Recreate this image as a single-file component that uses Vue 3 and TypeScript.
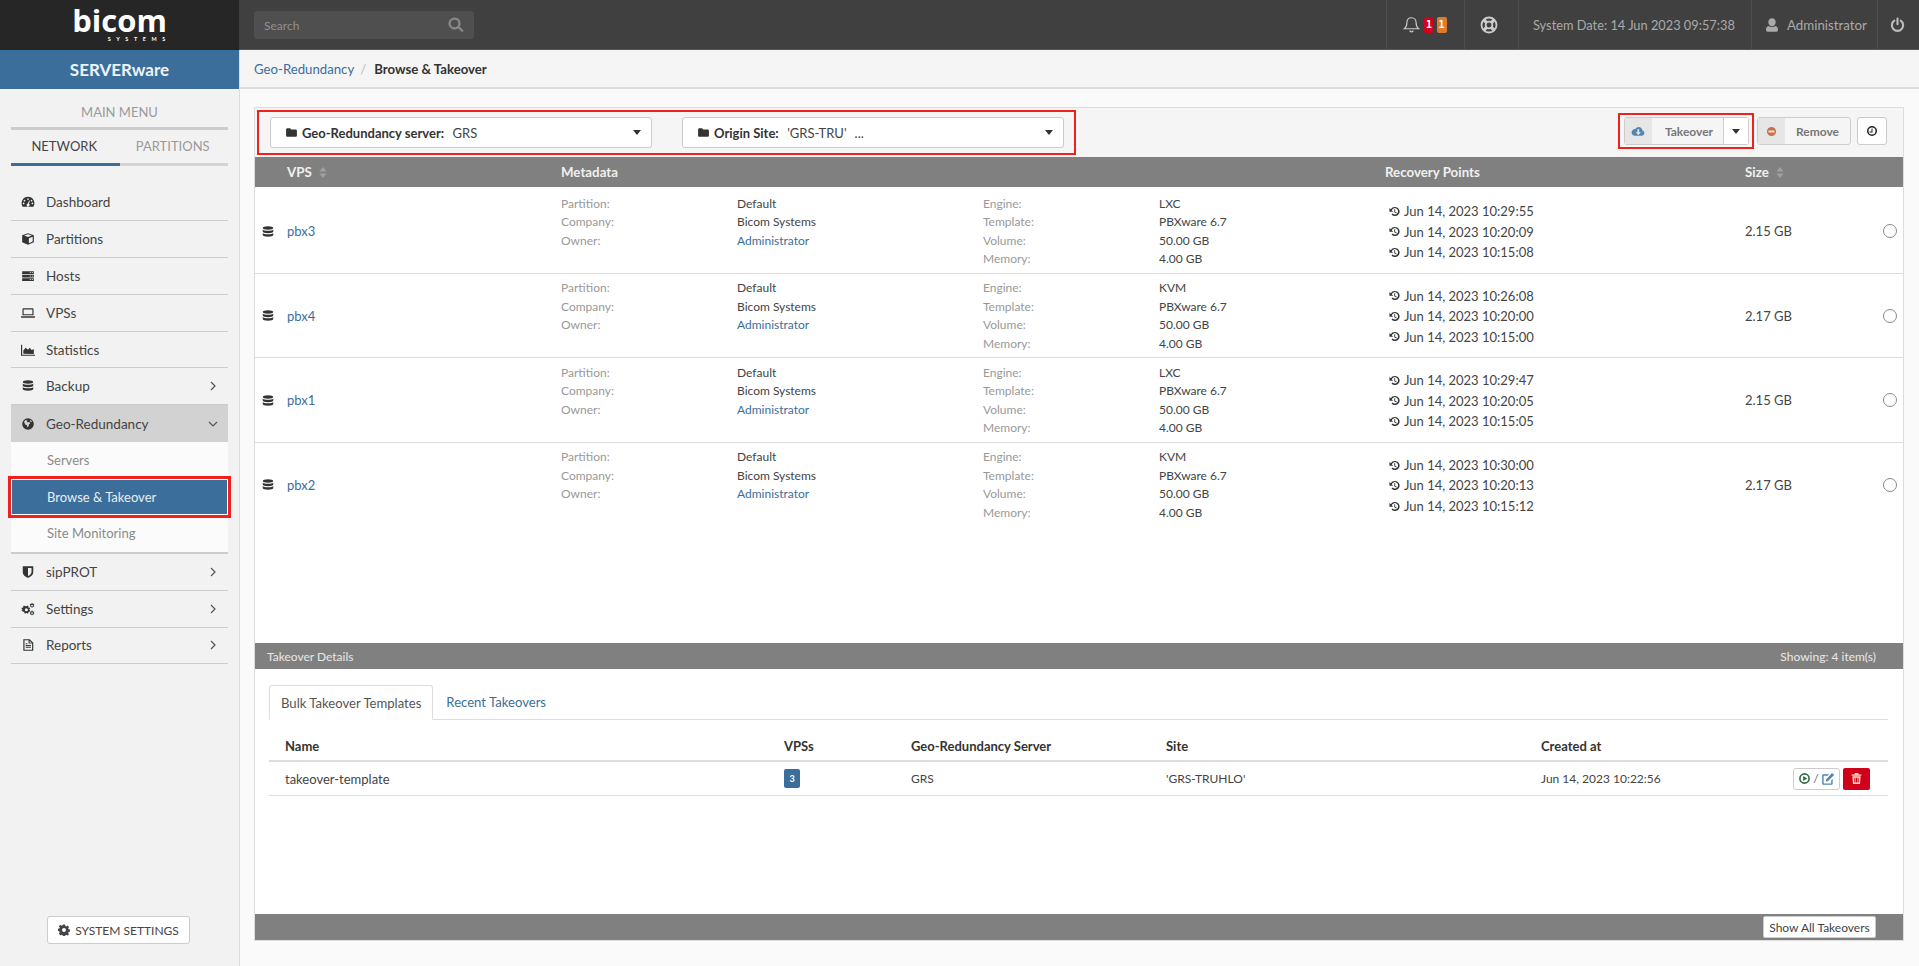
<script setup lang="ts">
const P: Record<string, string> = {
  search: 'M10 2a8 8 0 1 0 4.9 14.3l5.4 5.4 2-2-5.4-5.4A8 8 0 0 0 10 2zm0 3a5 5 0 1 1 0 10 5 5 0 0 1 0-10z',
  user: 'M12 2a5.5 5.5 0 0 1 5.5 6c0 3.2-2.3 6-5.5 6S6.500 11.200 6.500 8A5.500 5.500 0 0 1 12 2zM7 13.500c1.300 1.100 3 1.800 5 1.800s3.700-.7 5-1.800c2.800.3 4 2.500 4 6 0 1.600-1 2.500-2.500 2.500h-13C4 22 3 21.100 3 19.500c0-3.500 1.200-5.700 4-6z',
  folder: 'M2 6.500C2 5.100 3.100 4 4.500 4h4C9.900 4 11 5.100 11 6.500h8.500C20.900 6.500 22 7.600 22 9v8.500c0 1.400-1.100 2.500-2.500 2.500h-15C3.100 20 2 18.900 2 17.500z',
  cloud: 'M19.300 10.500C19 7.400 16.500 5 13.300 5c-2.300 0-4.300 1.300-5.300 3.200C4.800 8.400 1 10.900 1 14.500 1 17.500 3.500 20 6.500 20h12c2.500 0 4.500-2 4.500-4.500 0-2.400-1.700-4.500-3.700-5zM11 9h3v5h3l-4.500 5L8 14h3z',
  minus: 'M12 2a10 10 0 1 0 0 20 10 10 0 0 0 0-20zM5.500 10h13v4h-13z',
  db: 'M12 2c5 0 9 1.300 9 3s-4 3-9 3-9-1.300-9-3 4-3 9-3zM3 7.500c1.500 1.700 5 2.400 9 2.400s7.500-.7 9-2.400V11c0 1.700-4 3-9 3s-9-1.300-9-3zM3 13.500c1.500 1.700 5 2.400 9 2.400s7.500-.7 9-2.400V17c0 1.700-4 3-9 3s-9-1.300-9-3z',
  gauge: 'M12 3a11 11 0 0 0-9.500 16.500c.3.400.7.500 1 .5h17c.3 0 .7-.1 1-.5A11 11 0 0 0 12 3zm0 2.500a1.500 1.500 0 1 1 0 3 1.500 1.500 0 0 1 0-3zM6 8a1.500 1.500 0 1 1 0 3 1.500 1.500 0 0 1 0-3zm12 0a1.500 1.500 0 1 1 0 3 1.500 1.500 0 0 1 0-3zM4.500 13a1.500 1.500 0 1 1 0 3 1.500 1.500 0 0 1 0-3zm15 0a1.500 1.500 0 1 1 0 3 1.500 1.500 0 0 1 0-3zm-5.500-3.500 1.200.4-1.500 5.300a2.500 2.500 0 1 1-2.300-.4z',
  cube: 'M12 2 22 5.500v12L12 22 2 17.500v-12zM5.500 6 12 8.500 18.500 6 12 3.800zM13.500 10.500v8.800l6.500-3V8z',
  server: 'M2 4h20v4.500H2zM2 10h20v4.500H2zM2 16h20v4.500H2zM15 5.500v1.500h2V5.500zm3.500 0v1.500h2V5.500zM15 11.500V13h2v-1.500zm3.500 0V13h2v-1.500zM15 17.500V19h2v-1.500zm3.500 0V19h2v-1.500z',
  laptop: 'M4 4h16c.8 0 1.500.7 1.500 1.500V16h-19V5.500C2.500 4.700 3.200 4 4 4zm.5 2v8h15V6zM0 17.500h24V19c0 .6-.5 1-1 1H1c-.5 0-1-.4-1-1z',
  chart: 'M0 3h2v17h22v2H0zM4 18.500V13l4-5 4 3.500 3-3.500 3 4 4-1.500v8.500z',
  globe: 'M12 2a10 10 0 1 0 0 20 10 10 0 0 0 0-20zM5 8l3-3 3 1-1 2 2 1 2-1 2 3-2 1-1 4-2 2-1-4-3-1-1-3zm11-3 3 3-2 1-2-3z',
  shield: 'M3 2h18v10c0 5-4.500 8.500-9 10-4.500-1.500-9-5-9-10zM12 5v14c3-1.300 6-3.700 6-7V5z',
  cogs: 'M8.500 7l1.500.4 1-1.200 2 1.200-.6 1.500 1 1 1.500-.4.800 2.200-1.400.8v1.400l1.400.8-.8 2.200-1.500-.4-1 1 .6 1.500-2 1.200-1-1.200h-1.500l-1 1.200-2-1.200.6-1.500-1-1-1.500.4L.8 14.700l1.400-.8v-1.400l-1.400-.8.8-2.200 1.500.4 1-1-.6-1.500 2-1.200 1 1.200zm.7 3.500a2.700 2.700 0 1 0 0 5.400 2.700 2.700 0 0 0 0-5.400zM18.500 1.500l1 .2.400 1.300 1.200.6 1.200-.4.600 1-1 .9v1.300l1 .9-.6 1-1.200-.4-1.200.6-.4 1.300h-1.200l-.4-1.300-1.100-.6-1.200.4-.6-1 1-.9V5.100l-1-.9.600-1 1.200.4 1.100-.6zm.4 3a1.500 1.500 0 1 0 0 3 1.500 1.500 0 0 0 0-3zM18.500 14.500l1 .2.400 1.300 1.200.6 1.200-.4.600 1-1 .9v1.300l1 .9-.6 1-1.200-.4-1.200.6-.4 1.300h-1.200l-.4-1.300-1.100-.6-1.200.4-.6-1 1-.9v-1.300l-1-.9.600-1 1.200.4 1.100-.6zm.4 3a1.500 1.500 0 1 0 0 3 1.500 1.500 0 0 0 0-3z',
  file: 'M4 2h11l6 6v14H4zm2 2v16h13V9.500h-6V4zm9 .8V8h3.200zM8 12h9v1.500H8zm0 3h9v1.500H8zm0-6h3v1.500H8z',
  clock: 'M12 2a10 10 0 1 0 0 20 10 10 0 0 0 0-20zm0 3a7 7 0 1 1 0 14 7 7 0 0 1 0-14zm-1 2v6h-4v2h6V7z',
  history: 'M13 2a10 10 0 1 1-7.500 16.600l2.200-2A7 7 0 1 0 6 9.500L9 12.500H1V4.500l2.900 2.800A10 10 0 0 1 13 2zm-1.500 5h2v5.500l3.500 2-1 1.700-4.500-2.700z',
  play: 'M12 2a10 10 0 1 0 0 20 10 10 0 0 0 0-20zm0 3a7 7 0 1 1 0 14 7 7 0 0 1 0-14zM9.500 7.500 17 12l-7.500 4.500z',
  edit: 'M4 4h10l-2.500 2.500H4.500v13h13V14l2.500-2.500V20c0 1-1 2-2 2H4c-1 0-2-1-2-2V6c0-1 1-2 2-2zM19 1.500l3.500 3.500L12 15.500 8 16.500l1-4z',
  trash: 'M9 2h6l1 2.500h5V7H3V4.500h5zM4.500 8h15L18.500 22h-13zM8 10.500v9h2v-9zm3 0v9h2v-9zm3 0v9h2v-9z',
  cog: 'M10 1h4l.6 3 2 .9 2.600-1.700 2.800 2.800-1.700 2.600.9 2 3 .6v4l-3 .6-.9 2 1.700 2.600-2.800 2.800-2.600-1.700-2 .9-.6 3h-4l-.6-3-2-.9-2.600 1.700L1.800 18.900l1.700-2.600-.9-2-3-.6v-4l3-.6.9-2L1.800 4.500l2.800-2.800 2.600 1.700 2-.9zm2 7a4 4 0 1 0 0 8 4 4 0 0 0 0-8z',
}
const menu = [
  { t: 'Dashboard', i: 'gauge' }, { t: 'Partitions', i: 'cube' }, { t: 'Hosts', i: 'server' },
  { t: 'VPSs', i: 'laptop' }, { t: 'Statistics', i: 'chart' }, { t: 'Backup', i: 'db', more: true },
]
const menu2 = [
  { t: 'sipPROT', i: 'shield' }, { t: 'Settings', i: 'cogs' }, { t: 'Reports', i: 'file' },
]
const rows = [
  { n: 'pbx3', e: 'LXC', r: ['10:29:55', '10:20:09', '10:15:08'], s: '2.15 GB' },
  { n: 'pbx4', e: 'KVM', r: ['10:26:08', '10:20:00', '10:15:00'], s: '2.17 GB' },
  { n: 'pbx1', e: 'LXC', r: ['10:29:47', '10:20:05', '10:15:05'], s: '2.15 GB' },
  { n: 'pbx2', e: 'KVM', r: ['10:30:00', '10:20:13', '10:15:12'], s: '2.17 GB' },
]
</script>

<template>
  <div class="page">
    <header class="top">
      <div class="logo">
        <span class="logo-main">bicom</span>
        <span class="logo-sub">SYSTEMS</span>
      </div>
      <div class="topbar">
        <div class="search">
          <span>Search</span>
          <svg class="ic s-search" viewBox="0 0 24 24"><path :d="P.search" /></svg>
        </div>
        <div class="top-right">
          <div class="cell c-bell">
            <svg class="bell" viewBox="0 0 24 24"><path d="M12 2.500c-4 0-6.500 3-6.500 7 0 5-1.500 7-3.500 8.500h20c-2-1.500-3.500-3.500-3.500-8.500 0-4-2.500-7-6.500-7zM9.500 20.500a2.600 2.600 0 0 0 5 0" /></svg>
            <span class="num red">1</span><span class="num orange">1</span>
          </div>
          <div class="cell c-ring">
            <svg class="ring" viewBox="0 0 24 24">
              <circle cx="12" cy="12" r="10" /><circle cx="12" cy="12" r="4.500" />
              <path class="band" d="M5 5l3.800 3.800M19 5l-3.800 3.800M5 19l3.800-3.800M19 19l-3.800-3.800" />
            </svg>
          </div>
          <div class="cell c-date">System Date: 14 Jun 2023 09:57:38</div>
          <div class="cell c-user">
            <svg class="ic u-ic" viewBox="0 0 24 24"><path :d="P.user" /></svg>
            <span>Administrator</span>
          </div>
          <div class="cell c-power">
            <svg class="power" viewBox="0 0 24 24"><path d="M12 2.500v9M6.800 5.800a9 9 0 1 0 10.400 0" /></svg>
          </div>
        </div>
      </div>
    </header>

    <div class="body">
      <aside class="side">
        <div class="brand">SERVERware</div>
        <div class="main-menu">MAIN MENU</div>
        <div class="side-tabs">
          <div class="side-tab on">NETWORK</div>
          <div class="side-tab">PARTITIONS</div>
        </div>
        <nav class="nav">
          <div v-for="m in menu" :key="m.t" class="nav-item">
            <svg class="ic nav-ic" viewBox="0 0 24 24"><path :d="P[m.i]" /></svg>
            <span class="nav-t">{{ m.t }}</span>
            <svg v-if="m.more" class="chev" viewBox="0 0 8 12"><path d="M2 2l4 4-4 4" /></svg>
          </div>
          <div class="nav-item open">
            <svg class="ic nav-ic" viewBox="0 0 24 24"><path :d="P.globe" /></svg>
            <span class="nav-t">Geo-Redundancy</span>
            <svg class="chev down" viewBox="0 0 12 8"><path d="M2 2l4 4 4-4" /></svg>
          </div>
          <div class="subnav">
            <div class="sub">Servers</div>
            <div class="sub active">Browse &amp; Takeover</div>
            <div class="sub">Site Monitoring</div>
          </div>
          <div v-for="m in menu2" :key="m.t" class="nav-item">
            <svg class="ic nav-ic" viewBox="0 0 24 24"><path :d="P[m.i]" /></svg>
            <span class="nav-t">{{ m.t }}</span>
            <svg class="chev" viewBox="0 0 8 12"><path d="M2 2l4 4-4 4" /></svg>
          </div>
        </nav>
        <div class="side-foot">
          <button class="sys">
            <svg class="ic" viewBox="0 0 24 24"><path :d="P.cog" /></svg>
            SYSTEM SETTINGS
          </button>
        </div>
      </aside>

      <main class="main">
        <div class="crumbs">
          <a>Geo-Redundancy</a><span class="slash">/</span><b>Browse &amp; Takeover</b>
        </div>
        <div class="content">
          <section class="panel">
            <div class="toolbar">
              <div class="filters">
                <div class="select">
                  <svg class="ic" viewBox="0 0 24 24"><path :d="P.folder" /></svg>
                  <b>Geo-Redundancy server:</b><span>GRS</span><i class="caret"></i>
                </div>
                <div class="select">
                  <svg class="ic" viewBox="0 0 24 24"><path :d="P.folder" /></svg>
                  <b>Origin Site:</b><span>'GRS-TRU'<em class="blank"></em>...</span><i class="caret"></i>
                </div>
              </div>
              <div class="actions">
                <div class="take-box">
                  <div class="btn-group">
                    <span class="btn-ic"><svg class="ic blue" viewBox="0 0 24 24"><path :d="P.cloud" /></svg></span>
                    <span class="btn-label shifted">Takeover</span>
                    <span class="btn-caret"><i class="caret"></i></span>
                  </div>
                </div>
                <div class="btn-group remove">
                  <span class="btn-ic"><svg class="ic orange-ic" viewBox="0 0 24 24"><path :d="P.minus" /></svg></span>
                  <span class="btn-label">Remove</span>
                </div>
                <button class="clock-btn"><svg class="ic" viewBox="0 0 24 24"><path :d="P.clock" /></svg></button>
              </div>
            </div>

            <div class="grid head">
              <span></span>
              <span class="h">VPS <svg class="sort" viewBox="0 0 8 12"><path d="M4 0l4 5H0zM4 12 0 7h8z" /></svg></span>
              <span class="h meta">Metadata</span>
              <span class="h rec">Recovery Points</span>
              <span class="h">Size <svg class="sort" viewBox="0 0 8 12"><path d="M4 0l4 5H0zM4 12 0 7h8z" /></svg></span>
            </div>
            <div class="rows">
              <div v-for="r in rows" :key="r.n" class="grid row">
                <svg class="ic db" viewBox="0 0 24 24"><path :d="P.db" /></svg>
                <a class="vps">{{ r.n }}</a>
                <div class="stack lab"><span>Partition:</span><span>Company:</span><span>Owner:</span></div>
                <div class="stack"><span>Default</span><span>Bicom Systems</span><a>Administrator</a></div>
                <div class="stack lab"><span>Engine:</span><span>Template:</span><span>Volume:</span><span>Memory:</span></div>
                <div class="stack"><span>{{ r.e }}</span><span>PBXware 6.7</span><span>50.00 GB</span><span>4.00 GB</span></div>
                <div class="points">
                  <div v-for="p in r.r" :key="p" class="point">
                    <svg class="ic" viewBox="0 0 24 24"><path :d="P.history" /></svg>Jun 14, 2023 {{ p }}
                  </div>
                </div>
                <div class="size">
                  <span>{{ r.s }}</span>
                  <i class="radio"></i>
                </div>
              </div>
            </div>

            <div class="bar details"><span>Takeover Details</span><span>Showing: 4 item(s)</span></div>
            <div class="lower">
              <div class="tabs">
                <div class="tab on">Bulk Takeover Templates</div>
                <div class="tab">Recent Takeovers</div>
              </div>
              <div class="tgrid thead">
                <span>Name</span><span>VPSs</span><span>Geo-Redundancy Server</span><span>Site</span><span>Created at</span><span></span>
              </div>
              <div class="tgrid tbody">
                <span class="tname">takeover-template</span>
                <span><i class="count">3</i></span>
                <span>GRS</span>
                <span>'GRS-TRUHLO'</span>
                <span>Jun 14, 2023 10:22:56</span>
                <span class="row-btns">
                  <span class="run">
                    <svg class="ic green" viewBox="0 0 24 24"><path :d="P.play" /></svg>/<svg class="ic blue2" viewBox="0 0 24 24"><path :d="P.edit" /></svg>
                  </span>
                  <span class="del"><svg class="ic" viewBox="0 0 24 24"><path :d="P.trash" /></svg></span>
                </span>
              </div>
            </div>
            <div class="bar foot"><button class="show-all">Show All Takeovers</button></div>
          </section>
        </div>
      </main>
    </div>
  </div>
</template>

<style>
html, body { margin: 0; height: 100%; overflow: hidden; }
</style>

<style scoped>
.page { height: 966px; display: flex; flex-direction: column; font-family: Lato, "Liberation Sans", sans-serif; font-size: 13px; color: #333; background: #fafafa; overflow: hidden; }
.ic { width: 1em; height: 1em; fill: currentColor; fill-rule: evenodd; flex: none; }
a { color: #3c6e9b; }

.top { height: 50px; display: flex; flex: none; }
.logo { width: 239px; background: #262626; display: flex; flex-direction: column; align-items: center; color: #fff; padding-top: 5px; box-sizing: border-box; }
.logo-main { font: 700 31px/30px "Open Sans", Lato, sans-serif; }
.logo-sub { font: 700 5.500px/6px Lato, sans-serif; letter-spacing: 5.600px; align-self: flex-end; margin: 1px 68px 0 0; }
.topbar { flex: 1; background: #404040; display: flex; justify-content: space-between; border-left: 1px solid #404040; border-bottom: 1px solid #555; min-width: 0; }
.search { width: 220px; height: 28px; margin: 11px 0 0 14px; background: #4f4f4f; border-radius: 3px; display: flex; align-items: center; justify-content: space-between; padding: 0 9px 0 10px; box-sizing: border-box; color: #8f8f8f; font-size: 12px; }
.s-search { font-size: 18px; color: #888; }
.top-right { display: flex; color: #aaa; }
.cell { display: flex; align-items: center; border-left: 1px solid #4d4d4d; box-sizing: border-box; }
.c-bell { width: 78px; padding-left: 16px; }
.c-ring { width: 54px; justify-content: center; padding-right: 5px; }
.c-date { width: 233px; padding-left: 14px; font-size: 12.800px; white-space: nowrap; }
.c-user { width: 126px; padding-left: 12px; gap: 7px; font-size: 13.300px; }
.c-power { width: 42px; padding-left: 12px; }
.u-ic { font-size: 16px; }
.bell { width: 17px; height: 17px; fill: none; stroke: #ccc; stroke-width: 1.6; margin-right: 4px; }
.ring { width: 18px; height: 18px; fill: none; stroke: #ccc; stroke-width: 2.400; }
.band { stroke-width: 4.500; }
.power { width: 15px; height: 15px; fill: none; stroke: #bbb; stroke-width: 3.400; stroke-linecap: round; }
.num { width: 10px; height: 16px; line-height: 16px; text-align: center; color: #fff; font-size: 10px; font-family: "DejaVu Sans Mono", monospace; font-weight: 700; border-radius: 2px; margin-right: 2.500px; }
.red { background: #d0021b; }
.orange { background: #e07b2e; }

.body { flex: 1; display: flex; min-height: 0; }
.side { width: 240px; flex: none; box-sizing: border-box; background: #f2f2f2; border-right: 1px solid #ddd; display: flex; flex-direction: column; }
.brand { height: 39px; background: #3c6e9b; color: #eef3f7; font-size: 17px; font-weight: 700; text-align: center; line-height: 39px; }
.main-menu { margin: 15px 11px 0; text-align: center; color: #9a9a9a; font-size: 13px; height: 23px; line-height: 16px; border-bottom: 3px solid #ccc; }
.side-tabs { display: flex; margin: 0 11px; }
.side-tab { flex: 1; height: 33px; line-height: 33px; text-align: center; color: #9a9a9a; font-size: 13px; border-bottom: 3px solid #d4d4d4; padding-right: 2px; }
.side-tab.on { color: #444; border-bottom-color: #3c6e9b; }
.nav { margin: 18px 11px 0; font-size: 13.500px; color: #444; }
.nav-item { height: 36.900px; display: flex; align-items: center; border-bottom: 1px solid #ccc; box-sizing: border-box; padding: 0 11px 0 10px; }
.nav-ic { font-size: 14px; margin-right: 11px; color: #333; }
.nav-t { flex: 1; }
.chev { width: 8px; height: 12px; fill: none; stroke: #555; stroke-width: 1.200; flex: none; }
.chev.down { width: 12px; height: 8px; margin-right: -2px; }
.open { background: #d2d2d2; border-bottom: 0; }
.subnav { background: #fbfbfb; border-bottom: 2px solid #ccc; color: #8a8a8a; font-size: 13px; }
.sub { height: 36.500px; line-height: 36px; padding-left: 36px; box-sizing: border-box; }
.sub.active { background: #3c6e9b; color: #e8eef4; outline: 3px solid #f0201c; border: 1px solid #fff; position: relative; line-height: 34px; padding-left: 35px; }
.side-foot { margin-top: auto; height: 50px; display: flex; justify-content: center; padding-right: 2px; }
.sys { width: 143px; height: 28px; background: #fff; border: 1px solid #ccc; border-radius: 3px; font: 12px Lato, sans-serif; color: #444; display: flex; align-items: center; justify-content: center; gap: 5px; padding: 0; }

.main { flex: 1; min-width: 0; display: flex; flex-direction: column; }
.crumbs { height: 39px; box-sizing: border-box; background: #f5f5f5; border-bottom: 2px solid #ddd; display: flex; align-items: center; padding-left: 14px; font-size: 13.200px; }
.crumbs b { font-weight: 700; color: #333; }
.slash { color: #bbb; margin: 0 8px 0 6px; }
.content { flex: 1; padding: 18px 15px 25px 14px; min-height: 0; display: flex; }
.panel { flex: 1; min-width: 0; border: 1px solid #ddd; background: #fff; display: flex; flex-direction: column; }

.toolbar { height: 49px; flex: none; background: #f5f5f5; display: flex; justify-content: space-between; }
.filters { margin: 2px 0 0 2px; height: 45px; box-sizing: border-box; border: 2px solid #f0201c; width: 819px; display: flex; gap: 30px; padding: 5px 0 0 11px; }
.select { width: 382px; height: 31px; box-sizing: border-box; background: #fff; border: 1px solid #ccc; border-radius: 3px; display: flex; align-items: center; padding: 0 10px 0 14px; font-size: 13px; color: #444; }
.select .ic { font-size: 13px; margin-right: 4px; color: #333; }
.select b { font-weight: 700; margin-right: 8.500px; color: #333; }
.select span { flex: 1; white-space: nowrap; }
.blank { display: inline-block; width: 8px; }
.caret { width: 0; height: 0; border-left: 4px solid transparent; border-right: 4px solid transparent; border-top: 5px solid #333; display: inline-block; }
.actions { display: flex; align-items: flex-start; padding: 9px 16px 0 0; }
.take-box { border: 2px solid #f0201c; height: 36px; width: 136px; box-sizing: border-box; margin: -4px 3px 0 0; display: flex; align-items: center; justify-content: center; }
.btn-group { height: 28px; box-sizing: border-box; border: 1px solid #ccc; border-radius: 3px; background: #f5f5f5; display: flex; align-items: center; color: #777; font-size: 12px; font-weight: 700; }
.take-box .btn-group { width: 125px; }
.remove { width: 94px; margin-right: 6px; }
.btn-ic { width: 27px; height: 100%; background: #e6e6e6; display: flex; align-items: center; justify-content: center; flex: none; }
.btn-label { flex: 1; text-align: center; }
.shifted { padding-left: 4px; }
.btn-caret { width: 24px; height: 100%; background: #fff; border-left: 1px solid #ccc; display: flex; align-items: center; justify-content: center; flex: none; }
.blue { color: #4f86b5; font-size: 14px; }
.orange-ic { color: #c9714a; font-size: 11px; }
.clock-btn { width: 30px; height: 28px; background: #fff; border: 1px solid #ccc; border-radius: 3px; display: flex; align-items: center; justify-content: center; padding: 0; color: #222; font-size: 12px; }

.grid { display: grid; grid-template-columns: 32px 274px 176px 246px 176px 226px 360px 1fr; }
.head { height: 30px; background: #808080; color: #f0f0f0; align-items: center; flex: none; font-size: 13.300px; font-weight: 700; }
.head .meta { grid-column: 3 / 7; }
.sort { width: 8px; height: 11px; fill: #a0a0a0; margin-left: 4px; vertical-align: -1px; }
.rows { flex: 1; padding-top: 2px; min-height: 0; }
.row { height: 84.600px; box-sizing: border-box; border-bottom: 1px solid #ddd; align-items: start; padding-top: 5.500px; font-size: 12px; line-height: 18.600px; }
.row:last-child { border-bottom: 0; }
.db { font-size: 14px; margin: 30px 0 0 6px; color: #333; }
.vps { font-size: 13px; margin-top: 27.500px; }
.stack { display: flex; flex-direction: column; color: #444; }
.lab { color: #999; }
.points { font-size: 13px; line-height: 20.500px; color: #444; margin-top: 6.500px; }
.point { display: flex; align-items: center; gap: 4px; }
.point .ic { font-size: 11px; margin-left: 4px; color: #333; }
.size { display: flex; justify-content: space-between; align-items: center; font-size: 13px; color: #444; margin-top: 27.500px; padding-right: 6px; }
.radio { width: 12px; height: 12px; border: 1.500px solid #888; border-radius: 50%; flex: none; }

.bar { height: 26px; flex: none; background: #808080; color: #e8e8e8; display: flex; align-items: center; justify-content: space-between; padding: 0 27px 0 12px; font-size: 12px; }
.lower { height: 245px; flex: none; padding: 16px 15px 0 14px; box-sizing: border-box; }
.tabs { display: flex; height: 35px; border-bottom: 1px solid #ddd; box-sizing: border-box; }
.tab { padding: 0 13px; font-size: 13.100px; height: 35px; line-height: 34px; box-sizing: border-box; color: #3c6e9b; }
.tab.on { background: #fff; color: #555; border: 1px solid #ddd; border-bottom-color: #fff; border-radius: 3px 3px 0 0; padding: 0 11px; }
.tgrid { display: grid; grid-template-columns: 499px 127px 255px 375px 1fr 95px; padding-left: 16px; align-items: center; box-sizing: border-box; }
.thead { height: 42px; padding-top: 11px; border-bottom: 2px solid #ddd; font-weight: 700; font-size: 13px; color: #333; }
.tbody { height: 34px; border-bottom: 1px solid #ddd; font-size: 12px; color: #444; }
.tname { font-size: 13px; }
.count { display: inline-block; width: 16px; height: 19px; line-height: 19px; background: #3c6e9b; color: #fff; font-style: normal; font-size: 9px; font-weight: 700; text-align: center; border-radius: 2px; vertical-align: middle; }
.row-btns { display: flex; gap: 3px; }
.run { width: 47px; height: 22px; box-sizing: border-box; border: 1px solid #ccc; border-radius: 3px; display: flex; align-items: center; justify-content: center; gap: 2px; font-size: 12px; color: #666; }
.green { color: #2e6b45; font-size: 13px; }
.blue2 { color: #4f86b5; font-size: 14px; }
.del { width: 27px; height: 22px; background: #d0021b; border-radius: 2px; display: flex; align-items: center; justify-content: center; color: #ffdcc0; font-size: 13px; }
.foot { justify-content: flex-end; }
.show-all { height: 22px; width: 113px; padding: 0; background: #fff; border: 1px solid #ccc; border-radius: 2px; font: 12px Lato, sans-serif; color: #444; }
</style>
